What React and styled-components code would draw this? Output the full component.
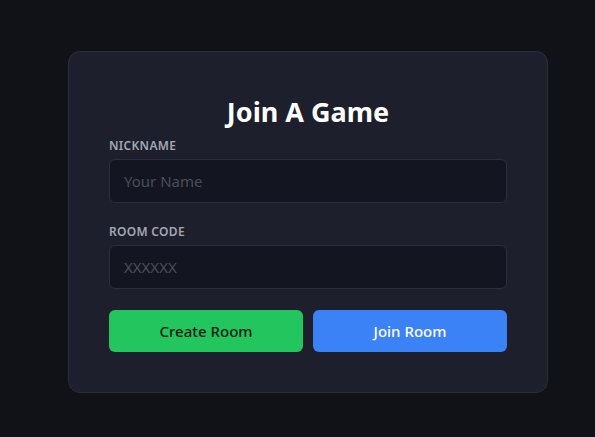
import React from "react";
import styled, { createGlobalStyle } from "styled-components";

const GlobalStyle = createGlobalStyle`
  html, body {
    margin: 0;
    padding: 0;
    background-color: #111218;
  }
  body {
    font-family: "Noto Sans", "Open Sans", sans-serif;
    color: #fff;
  }
  * {
    box-sizing: border-box;
  }
`;

const App = () => {
  return (
    <>
      <GlobalStyle />
      <Page>
        <Card>
          <Title>Join A Game</Title>
          <Field>
            <Label htmlFor="nickname">Nickname</Label>
            <Input id="nickname" placeholder="Your Name" />
          </Field>
          <Field>
            <Label htmlFor="room">Room Code</Label>
            <Input id="room" placeholder="XXXXXX" />
          </Field>
          <Actions>
            <Button color="green">Create Room</Button>
            <Button color="blue">Join Room</Button>
          </Actions>
        </Card>
      </Page>
    </>
  );
};

const Page = styled.div`
  display: flex;
  align-items: flex-start;
  width: 595px;
  height: 437px;
  padding: 51px 0 0 68px;
`;

const Card = styled.div`
  display: flex;
  flex-direction: column;
  width: 480px;
  padding: 40px;
  background-color: #1d1f2d;
  border: 1px solid #2a2d3c;
  border-radius: 12px;
`;

const Title = styled.h1`
  margin: 0 0 5px;
  font-size: 27px;
  line-height: 40px;
  font-weight: 700;
  text-align: center;
  color: #fff;
`;

const Field = styled.div`
  display: flex;
  flex-direction: column;
  gap: 4px;
  margin-bottom: 20px;
`;

const Label = styled.label`
  font-size: 12px;
  line-height: 18px;
  font-weight: 600;
  letter-spacing: 0.3px;
  text-transform: uppercase;
  color: #a3a7b2;
`;

const Input = styled.input`
  height: 44px;
  width: 100%;
  padding: 0 14px;
  font-family: inherit;
  font-size: 15px;
  color: #e5e7eb;
  background-color: #131520;
  border: 1px solid #2a2d3c;
  border-radius: 6px;
  outline: none;
  &::placeholder {
    color: #4a4e5c;
  }
`;

const Actions = styled.div`
  display: grid;
  grid-template-columns: 1fr 1fr;
  gap: 10px;
  margin-top: 1px;
`;

const Button = styled.button`
  height: 42px;
  font-family: inherit;
  font-size: 15px;
  font-weight: 500;
  border: none;
  border-radius: 6px;
  cursor: pointer;
  background-color: ${({ color }) => (color === "green" ? "#22c55e" : "#3b82f6")};
  color: ${({ color }) => (color === "green" ? "#0c1a12" : "#ffffff")};
`;

export default App;
